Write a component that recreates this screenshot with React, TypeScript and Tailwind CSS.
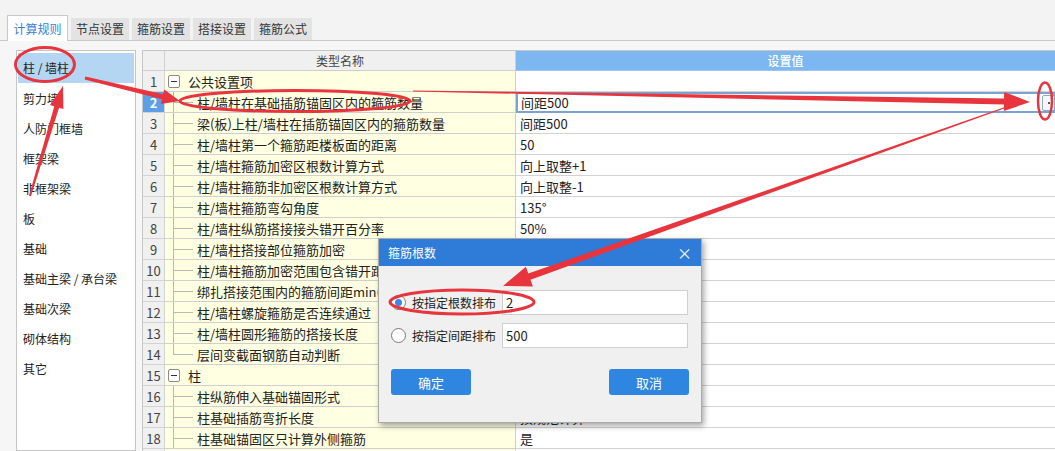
import React from 'react';

type Row = { n: number; name: string; value: string; group?: boolean; last?: boolean };

// values under the dialog are left blank, the screenshot does not show them
const rows: Row[] = [
  { n: 1, name: '公共设置项', value: '', group: true },
  { n: 2, name: '柱/墙柱在基础插筋锚固区内的箍筋数量', value: '间距500' },
  { n: 3, name: '梁(板)上柱/墙柱在插筋锚固区内的箍筋数量', value: '间距500' },
  { n: 4, name: '柱/墙柱第一个箍筋距楼板面的距离', value: '50' },
  { n: 5, name: '柱/墙柱箍筋加密区根数计算方式', value: '向上取整+1' },
  { n: 6, name: '柱/墙柱箍筋非加密区根数计算方式', value: '向上取整-1' },
  { n: 7, name: '柱/墙柱箍筋弯勾角度', value: '135°' },
  { n: 8, name: '柱/墙柱纵筋搭接接头错开百分率', value: '50%' },
  { n: 9, name: '柱/墙柱搭接部位箍筋加密', value: '' },
  { n: 10, name: '柱/墙柱箍筋加密范围包含错开距离', value: '' },
  { n: 11, name: '绑扎搭接范围内的箍筋间距min(5d,100)', value: '' },
  { n: 12, name: '柱/墙柱螺旋箍筋是否连续通过', value: '' },
  { n: 13, name: '柱/墙柱圆形箍筋的搭接长度', value: '' },
  { n: 14, name: '层间变截面钢筋自动判断', value: '', last: true },
  { n: 15, name: '柱', value: '', group: true },
  { n: 16, name: '柱纵筋伸入基础锚固形式', value: '' },
  { n: 17, name: '柱基础插筋弯折长度', value: '按规范计算' },
  { n: 18, name: '柱基础锚固区只计算外侧箍筋', value: '是' },
  { n: 19, name: '', value: '' },
];

const sideItems = ['柱 / 墙柱', '剪力墙', '人防门框墙', '框架梁', '非框架梁', '板', '基础', '基础主梁 / 承台梁', '基础次梁', '砌体结构', '其它'];

const tabs = ['计算规则', '节点设置', '箍筋设置', '搭接设置', '箍筋公式'];

// tapered arrow polygon, thin at the start, head at the tip
function arrowPoints(x1: number, y1: number, x2: number, y2: number, w1: number, w2: number, hl: number, hw: number) {
  const dx = x2 - x1;
  const dy = y2 - y1;
  const len = Math.hypot(dx, dy);
  const ux = dx / len;
  const uy = dy / len;
  const px = -uy;
  const py = ux;
  const bx = x2 - ux * hl;
  const by = y2 - uy * hl;
  const pts = [
    [x1 + (px * w1) / 2, y1 + (py * w1) / 2],
    [bx + (px * w2) / 2, by + (py * w2) / 2],
    [bx + (px * hw) / 2, by + (py * hw) / 2],
    [x2, y2],
    [bx - (px * hw) / 2, by - (py * hw) / 2],
    [bx - (px * w2) / 2, by - (py * w2) / 2],
    [x1 - (px * w1) / 2, y1 - (py * w1) / 2],
  ];
  return pts.map((p) => p.join(',')).join(' ');
}

function Tabs() {
  return (
    <div className="flex items-end h-[41px] pl-[7px] gap-[3px] border-b border-[#c9c9c9] bg-[#f3f3f3]">
      {tabs.map((t, i) =>
        i === 0 ? (
          <div
            key={t}
            className="w-[61px] h-[26px] -mb-px flex items-center justify-center bg-white border border-b-0 border-[#c9c9c9] text-[12px] text-[#3b7fd4]"
          >
            {t}
          </div>
        ) : (
          <div
            key={t}
            className="w-[58px] h-[22px] flex items-center justify-center bg-[#e3e3e3] text-[12px] text-[#333]"
          >
            {t}
          </div>
        )
      )}
    </div>
  );
}

function SidePanel() {
  return (
    <div className="w-[120px] shrink-0 h-full bg-white border border-[#c6c6c6] p-px">
      {sideItems.map((s, i) => (
        <div
          key={s}
          className={`h-[30px] flex items-center pl-[5px] text-[12px] text-[#222] ${i === 0 ? 'bg-[#b5d6f3] h-[28px] mt-px mb-px' : ''}`}
        >
          {s}
        </div>
      ))}
    </div>
  );
}

function NameCell({ row }: { row: Row }) {
  return (
    <div className="relative w-[351px] shrink-0 h-full bg-[#ffffe1] border-r border-b border-[#cfcfcf] flex items-center text-[13px] text-[#222]">
      {row.group ? (
        <>
          <div className="ml-[3px] w-[12px] h-[13px] border border-[#8a8a8a] rounded-[2px] bg-white flex items-center justify-center">
            <div className="w-[6px] h-px bg-[#333]" />
          </div>
          <span className="ml-[8px]">{row.name}</span>
        </>
      ) : row.name ? (
        <>
          <div className={`absolute left-[8px] top-0 w-px bg-[#b8b8b8] ${row.last ? 'h-[10px]' : 'h-full'}`} />
          <div className="absolute left-[8px] top-[10px] w-[20px] h-px bg-[#b8b8b8]" />
          <span className="ml-[32px] whitespace-nowrap">{row.name}</span>
        </>
      ) : null}
    </div>
  );
}

function Grid() {
  return (
    <div className="flex-1 h-full bg-white border-l border-t border-[#c6c6c6] overflow-hidden">
      <div className="flex h-[20px] text-[12px]">
        <div className="w-[22px] shrink-0 bg-[#f0f0f0] border-r border-b border-[#d0d0d0]" />
        <div className="w-[351px] shrink-0 bg-[#f0f0f0] border-r border-b border-[#cfcfcf] flex items-center justify-center text-[#444]">
          类型名称
        </div>
        <div className="flex-1 bg-[#7db7f1] border-b border-[#9fc6ee] flex items-center justify-center text-white font-medium">
          设置值
        </div>
      </div>
      {rows.map((r) => (
        <div key={r.n} className="flex h-[21px]">
          <div
            className={`w-[22px] shrink-0 border-r border-b border-[#d3d3d3] flex items-center justify-center text-[13px] ${
              r.n === 2 ? 'bg-[#5c9fe6] text-white font-bold' : 'bg-[#f0f0f0] text-[#444]'
            }`}
          >
            {r.n < 19 ? r.n : ''}
          </div>
          <NameCell row={r} />
          {r.n === 2 ? (
            <div className="flex-1 h-full border-2 border-[#7aa3d2] bg-white flex items-center justify-between pl-[3px] text-[13px] text-[#222]">
              <span>{r.value}</span>
              <div className="w-[13px] h-[16px] mr-[-2px] border border-[#8fa9c8] rounded-[2px] bg-[#f4f7fb] flex items-center justify-center">
                <div className="w-[2px] h-[2px] bg-[#555]" />
              </div>
            </div>
          ) : (
            <div className="flex-1 h-full border-b border-[#d3d3d3] flex items-center pl-[4px] text-[13px] text-[#222] whitespace-nowrap">
              {r.value}
            </div>
          )}
        </div>
      ))}
    </div>
  );
}

function Radio({ checked }: { checked?: boolean }) {
  return (
    <div className="w-[15px] h-[15px] shrink-0 rounded-full border border-[#7a7a7a] bg-white flex items-center justify-center">
      {checked && <div className="w-[7px] h-[7px] rounded-full bg-[#3f87e0]" />}
    </div>
  );
}

function Dialog() {
  return (
    <div className="absolute left-[378px] top-[238px] w-[324px] h-[185px] bg-[#f0f0f0] border border-[#a9a9a9] shadow-[2px_3px_6px_rgba(0,0,0,0.35)] flex flex-col">
      <div className="h-[27px] shrink-0 bg-[#2f7bd8] flex items-center justify-between pl-[9px] pr-[9px] text-white text-[12px]">
        <span>箍筋根数</span>
        <span className="text-[15px] leading-none">×</span>
      </div>
      <div className="flex flex-col pl-[12px] pr-[13px] pt-[24px] text-[12px] text-[#222]">
        <div className="flex items-center h-[25px]">
          <Radio checked />
          <span className="ml-[6px]">按指定根数排布</span>
          <div className="ml-auto w-[186px] h-[25px] bg-white border border-[#cfcfcf] flex items-center pl-[3px] text-[13px]">2</div>
        </div>
        <div className="flex items-center h-[25px] mt-[8px]">
          <Radio />
          <span className="ml-[6px]">按指定间距排布</span>
          <div className="ml-auto w-[186px] h-[25px] bg-white border border-[#cfcfcf] flex items-center pl-[3px] text-[13px]">500</div>
        </div>
        <div className="flex justify-between mt-[21px]">
          <div className="w-[80px] h-[26px] rounded-[3px] bg-[#2f86e0] text-white flex items-center justify-center text-[13px]">确定</div>
          <div className="w-[80px] h-[26px] rounded-[3px] bg-[#2f86e0] text-white flex items-center justify-center text-[13px] -mr-px">取消</div>
        </div>
      </div>
    </div>
  );
}

function Marks() {
  const red = '#e8353d';
  return (
    <svg className="absolute inset-0 pointer-events-none" width="1055" height="451" viewBox="0 0 1055 451">
      <ellipse cx="45" cy="64.5" rx="29.5" ry="17" fill="none" stroke={red} strokeWidth="3" />
      <ellipse cx="295" cy="101" rx="115" ry="10.5" fill="none" stroke={red} strokeWidth="3" />
      <ellipse cx="1045" cy="101" rx="7" ry="18.5" fill="none" stroke={red} strokeWidth="2.5" />
      <ellipse cx="462" cy="302" rx="72" ry="12" fill="none" stroke={red} strokeWidth="3" />
      <polygon points={arrowPoints(85, 78, 180, 101, 3, 5, 18, 15)} fill={red} />
      <polygon points={arrowPoints(30, 196, 63, 86, 2, 5, 22, 14)} fill={red} />
      <polygon points={arrowPoints(413, 91, 1030, 102, 1, 6, 26, 19)} fill={red} />
      <polygon points={arrowPoints(1015, 104, 503, 286, 0.8, 6.5, 28, 21)} fill={red} />
    </svg>
  );
}

export default function App() {
  return (
    <div className="relative w-[1055px] h-[451px] overflow-hidden bg-[#f3f3f3] font-['Noto_Sans_CJK_SC',sans-serif] leading-none">
      <Tabs />
      <div className="flex h-[410px] pt-[9px] pl-[16px] gap-[6px] bg-[#f6f6f6]">
        <SidePanel />
        <Grid />
      </div>
      <Dialog />
      <Marks />
    </div>
  );
}
